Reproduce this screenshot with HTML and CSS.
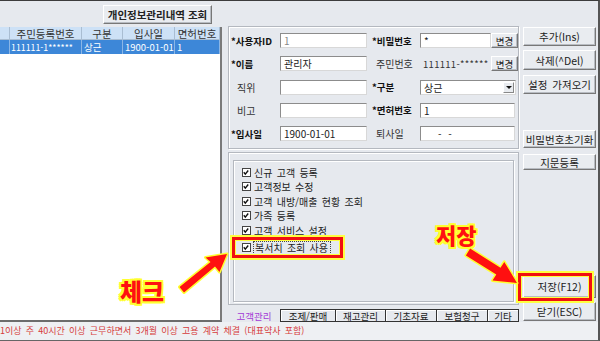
FILE: index.html
```html
<!DOCTYPE html>
<html lang="ko">
<head>
	<meta charset="UTF-8">
	<title>개인정보관리</title>
	<link rel="stylesheet" href="styles.css">
</head>
<body>
	<div class="window">
		<div class="main">
			<div class="left">
				<div class="topbar"><div class="btn btn-title">개인정보관리내역 조회</div></div>
				<div class="grid">
					<div class="grow head">
						<span class="c0"></span><span class="c1">주민등록번호</span><span class="c2">구분</span><span class="c3">입사일</span><span class="c4">면허번호</span>
					</div>
					<div class="grow sel">
						<span class="c0"></span><span class="c1 wide">111111-1******</span><span class="c2">상근</span><span class="c3">1900-01-01</span><span class="c4">1</span>
					</div>
				</div>
			</div>

			<div class="center">
				<div class="group form">
					<div class="row">
						<span class="lbl b">*사용자ID</span>
						<div class="inp w1 dim">1</div>
						<span class="lbl2 b">*비밀번호</span>
						<div class="inp w2">*</div>
						<div class="btn btn-sm">변경</div>
					</div>
					<div class="row">
						<span class="lbl b">*이름</span>
						<div class="inp w1">관리자</div>
						<span class="lbl2 n">주민번호</span>
						<div class="plain w2">111111-******</div>
						<div class="btn btn-sm">변경</div>
					</div>
					<div class="row">
						<span class="lbl n">직위</span>
						<div class="inp w1"></div>
						<span class="lbl2 b">*구분</span>
						<div class="inp w3 combo">상근<span class="drop"></span></div>
					</div>
					<div class="row">
						<span class="lbl n">비고</span>
						<div class="inp w1"></div>
						<span class="lbl2 b">*면허번호</span>
						<div class="inp w4">1</div>
					</div>
					<div class="row">
						<span class="lbl b">*입사일</span>
						<div class="inp w1">1900-01-01</div>
						<span class="lbl2 n">퇴사일</span>
						<div class="inp w4 date">- -</div>
					</div>
				</div>

				<div class="tabpage">
					<div class="group checks">
						<div class="chk"><span class="box"><svg width="9" height="9" viewBox="0 0 9 9"><path d="M2 4.3 L3.7 6.3 L7 2.3" fill="none" stroke="#111" stroke-width="1.6"/></svg></span>신규 고객 등록</div>
						<div class="chk"><span class="box"><svg width="9" height="9" viewBox="0 0 9 9"><path d="M2 4.3 L3.7 6.3 L7 2.3" fill="none" stroke="#111" stroke-width="1.6"/></svg></span>고객정보 수정</div>
						<div class="chk"><span class="box"><svg width="9" height="9" viewBox="0 0 9 9"><path d="M2 4.3 L3.7 6.3 L7 2.3" fill="none" stroke="#111" stroke-width="1.6"/></svg></span>고객 내방/매출 현황 조회</div>
						<div class="chk"><span class="box"><svg width="9" height="9" viewBox="0 0 9 9"><path d="M2 4.3 L3.7 6.3 L7 2.3" fill="none" stroke="#111" stroke-width="1.6"/></svg></span>가족 등록</div>
						<div class="chk"><span class="box"><svg width="9" height="9" viewBox="0 0 9 9"><path d="M2 4.3 L3.7 6.3 L7 2.3" fill="none" stroke="#111" stroke-width="1.6"/></svg></span>고객 서비스 설정</div>
						<div class="chk last"><span class="box"><svg width="9" height="9" viewBox="0 0 9 9"><path d="M2 4.3 L3.7 6.3 L7 2.3" fill="none" stroke="#111" stroke-width="1.6"/></svg></span><span class="focus">복서치 조회 사용</span></div>
					</div>
				</div>

				<div class="tabs">
					<span class="tab on">고객관리</span>
					<span class="tab t1">조제/판매</span>
					<span class="tab t2">재고관리</span>
					<span class="tab t3">기초자료</span>
					<span class="tab t3">보험청구</span>
					<span class="tab t4">기타</span>
				</div>
			</div>

			<div class="side">
				<div class="btn sb add">추가(Ins)</div>
				<div class="btn sb del">삭제(^Del)</div>
				<div class="btn sb load">설정 가져오기</div>
				<div class="btn sb reset">비밀번호초기화</div>
				<div class="btn sb finger">지문등록</div>
				<div class="btn sb save">저장(F12)</div>
				<div class="btn sb close">닫기(ESC)</div>
			</div>
		</div>
		<div class="footer">1이상 주 40시간 이상 근무하면서 3개월 이상 고용 계약 체결 (대표약사 포함)</div>

		<!-- 설명용 표시 -->
		<div class="mark mark-chk"></div>
		<div class="mark mark-save"></div>
		<div class="note note-chk">체크</div>
		<div class="note note-save">저장</div>
		<svg class="arrows" width="600" height="341" viewBox="0 0 600 341">
			<polygon points="184,292.5 215,266.5 219.5,272 227,254 205.5,257.5 210.5,262 179.5,287" fill="#ff1010" stroke="#ffff30" stroke-width="3" stroke-linejoin="round" paint-order="stroke"/>
			<polygon points="465.9,255.4 496.3,274.6 492.5,280.5 517,283 504.3,261.9 500.5,267.8 470.1,248.6" fill="#ff1010" stroke="#ffff30" stroke-width="3" stroke-linejoin="round" paint-order="stroke"/>
		</svg>
	</div>
</body>
</html>
```

FILE: styles.css
```css
*{
	padding: 0;
	margin: 0;
	box-sizing: border-box;
}
html,body{
	width: 100%;
	height: 100%;
}
body{
	font-family: "Noto Sans CJK KR", "Liberation Sans", sans-serif;
	font-size: 9.5px;
	color: #222;
	background-color: #e6e9ee;
	overflow: hidden;
}
.window{
	position: relative;
	width: 600px;
	height: 341px;
	border-top: 1px solid #3c3c3c;
	border-right: 2px solid #555;
	border-bottom: 1px solid #666;
	display: flex;
	flex-direction: column;
}
.main{
	display: flex;
	height: 321px;
}

/* buttons */
.btn{
	background-color: #e9ecf0;
	border: 1px solid;
	border-color: #fff #777 #777 #fff;
	box-shadow: inset -1px -1px 0 #b8bcc2;
	display: flex;
	justify-content: center;
	align-items: center;
	color: #222;
	white-space: nowrap;
}
.btn-title{
	width: 109px;
	height: 19px;
	font-weight: bold;
	font-size: 10.5px;
}
.btn-sm{
	width: 27px;
	height: 15px;
	font-size: 9.5px;
}

/* left list */
.left{
	width: 222px;
	display: flex;
	flex-direction: column;
}
.topbar{
	height: 26px;
	display: flex;
	justify-content: flex-end;
	align-items: flex-start;
	padding: 4px 10px 0 0;
}
.grid{
	flex: 1;
	background-color: #fff;
	border-right: 2px solid #7a7a7a;
	border-bottom: 2px solid #6c6c6c;
}
.grow{
	display: flex;
	height: 13px;
}
.grow span{
	display: flex;
	align-items: center;
	white-space: nowrap;
	overflow: hidden;
}
.head{
	background-color: #cde1f6;
	border-bottom: 1px solid #a9bdd2;
	font-size: 10.5px;
}
.head span{
	justify-content: center;
	border-right: 1px solid #a9bdd2;
	color: #333;
}
.sel{
	height: 14px;
	background-color: #3d87d8;
	color: #fff;
	font-size: 9.5px;
}
.sel span{
	padding-left: 2px;
	border-right: 1px solid #8ab6e6;
}
.sel .wide{
	font-size: 8.8px;
	padding-left: 1px;
}
.c0{ width: 10px; }
.c1{ width: 72px; }
.c2{ width: 41px; }
.c3{ width: 52px; }
.c4{ width: 45px; }

/* center form */
.center{
	width: 291px;
	margin-left: 6px;
	display: flex;
	flex-direction: column;
}
.group{
	border: 1px solid #b4b8bf;
	box-shadow: inset 1px 1px 0 #fff, 1px 1px 0 #fff;
}
.form{
	margin-top: 25px;
	height: 123px;
	padding: 6px 0 0 2px;
}
.row{
	display: flex;
	align-items: center;
	height: 15px;
	margin-bottom: 8.25px;
}
.lbl{
	width: 49px;
	white-space: nowrap;
}
.lbl2{
	width: 53px;
	padding-left: 5px;
	white-space: nowrap;
}
.b{
	font-weight: bold;
	color: #111;
}
.lbl.n{
	padding-left: 6px;
	color: #333;
	font-size: 10px;
}
.lbl2.n{
	padding-left: 9px;
	color: #333;
	font-size: 10px;
}
.inp{
	height: 15px;
	background-color: #fff;
	border: 1px solid;
	border-color: #8c8c8c #d8d8d8 #d8d8d8 #8c8c8c;
	padding-left: 3px;
	display: flex;
	align-items: center;
	white-space: nowrap;
	color: #222;
	font-size: 10px;
}
.dim{
	color: #888;
}
.plain{
	padding-left: 3px;
	color: #333;
	white-space: nowrap;
	letter-spacing: 0.3px;
}
.w1{ width: 87px; }
.w2{ width: 71px; }
.w3{ width: 96px; }
.w4{ width: 95px; }
.date{
	padding-left: 17px;
	word-spacing: 4px;
}
.combo{
	position: relative;
}
.drop{
	position: absolute;
	right: 1px;
	top: 1px;
	width: 11px;
	height: 11px;
	background-color: #e9ecf0;
	border: 1px solid;
	border-color: #fff #888 #888 #fff;
}
.drop:after{
	content: "";
	position: absolute;
	left: 2px;
	top: 3px;
	border-left: 3px solid transparent;
	border-right: 3px solid transparent;
	border-top: 3px solid #111;
}

/* check list */
.tabpage{
	margin-top: 3px;
	height: 153px;
	border: 1px solid #b4b8bf;
	box-shadow: inset 1px 1px 0 #fff;
	padding: 7px 4px 2px 4px;
}
.checks{
	height: 100%;
	padding: 4px 0 0 8px;
	font-size: 10px;
	word-spacing: 1.5px;
}
.chk{
	display: flex;
	align-items: center;
	height: 14.5px;
	white-space: nowrap;
	color: #222;
}
.box{
	width: 9px;
	height: 9px;
	border: 1px solid #444;
	background-color: #fff;
	margin-right: 3px;
	display: flex;
}
.box svg{
	margin: -1px 0 0 -1px;
}
.last{
	margin-top: 3px;
}
.focus{
	border: 1px dotted #444;
	padding: 0 2px 0 1px;
	margin-left: -1px;
	line-height: 12px;
}

/* tabs */
.tabs{
	margin-top: 4px;
	height: 13px;
	display: flex;
}
.tab{
	height: 13px;
	display: flex;
	justify-content: center;
	align-items: center;
	white-space: nowrap;
	border: 1px solid #333;
	box-shadow: inset 1px 1px 0 #fff;
	color: #222;
	margin-left: -1px;
}
.tab.on{
	width: 50px;
	border: none;
	box-shadow: none;
	color: #a33ad6;
	margin-left: 0;
	padding-left: 2px;
}
.t1{ width: 56px; margin-left: 2px; }
.t2{ width: 51px; }
.t3{ width: 52px; }
.t4{ width: 32px; }

/* right buttons */
.side{
	width: 73px;
	margin-left: 4px;
	display: flex;
	flex-direction: column;
}
.sb{
	font-size: 10.5px;
	word-spacing: 2px;
}
.add{ margin-top: 26px; height: 19px; }
.del{ margin-top: 4px; height: 20px; }
.load{ margin-top: 5px; height: 19px; }
.reset{ margin-top: 36px; height: 18px; }
.finger{ margin-top: 6px; height: 16px; }
.save{ margin-top: 105px; height: 23px; }
.close{ margin-top: 4px; height: 19px; }

/* bottom notice */
.footer{
	flex: 1;
	background-color: #eef0f3;
	color: #d63c3c;
	font-size: 9px;
	word-spacing: 1.7px;
	white-space: nowrap;
	overflow: hidden;
	padding-top: 2px;
}

/* annotations */
.mark{
	position: absolute;
	border: 3px solid #f01010;
	box-shadow: 0 0 0 2px #ffff40, inset 0 0 0 1px #ffff40;
}
.mark-chk{
	left: 232px;
	top: 236px;
	width: 111px;
	height: 21px;
}
.mark-save{
	left: 518px;
	top: 272px;
	width: 74px;
	height: 28px;
}
.note{
	position: absolute;
	font-weight: 900;
	color: #ff1010;
	text-shadow: 2px 0 #ffff30, -2px 0 #ffff30, 0 2px #ffff30, 0 -2px #ffff30, 2px 2px #ffff30, -2px -2px #ffff30, 2px -2px #ffff30, -2px 2px #ffff30;
	line-height: 1;
}
.note-chk{
	left: 120px;
	top: 278px;
	font-size: 24px;
}
.note-save{
	left: 436px;
	top: 222px;
	font-size: 22px;
}
.arrows{
	position: absolute;
	left: 0;
	top: -1px;
	pointer-events: none;
}
```
